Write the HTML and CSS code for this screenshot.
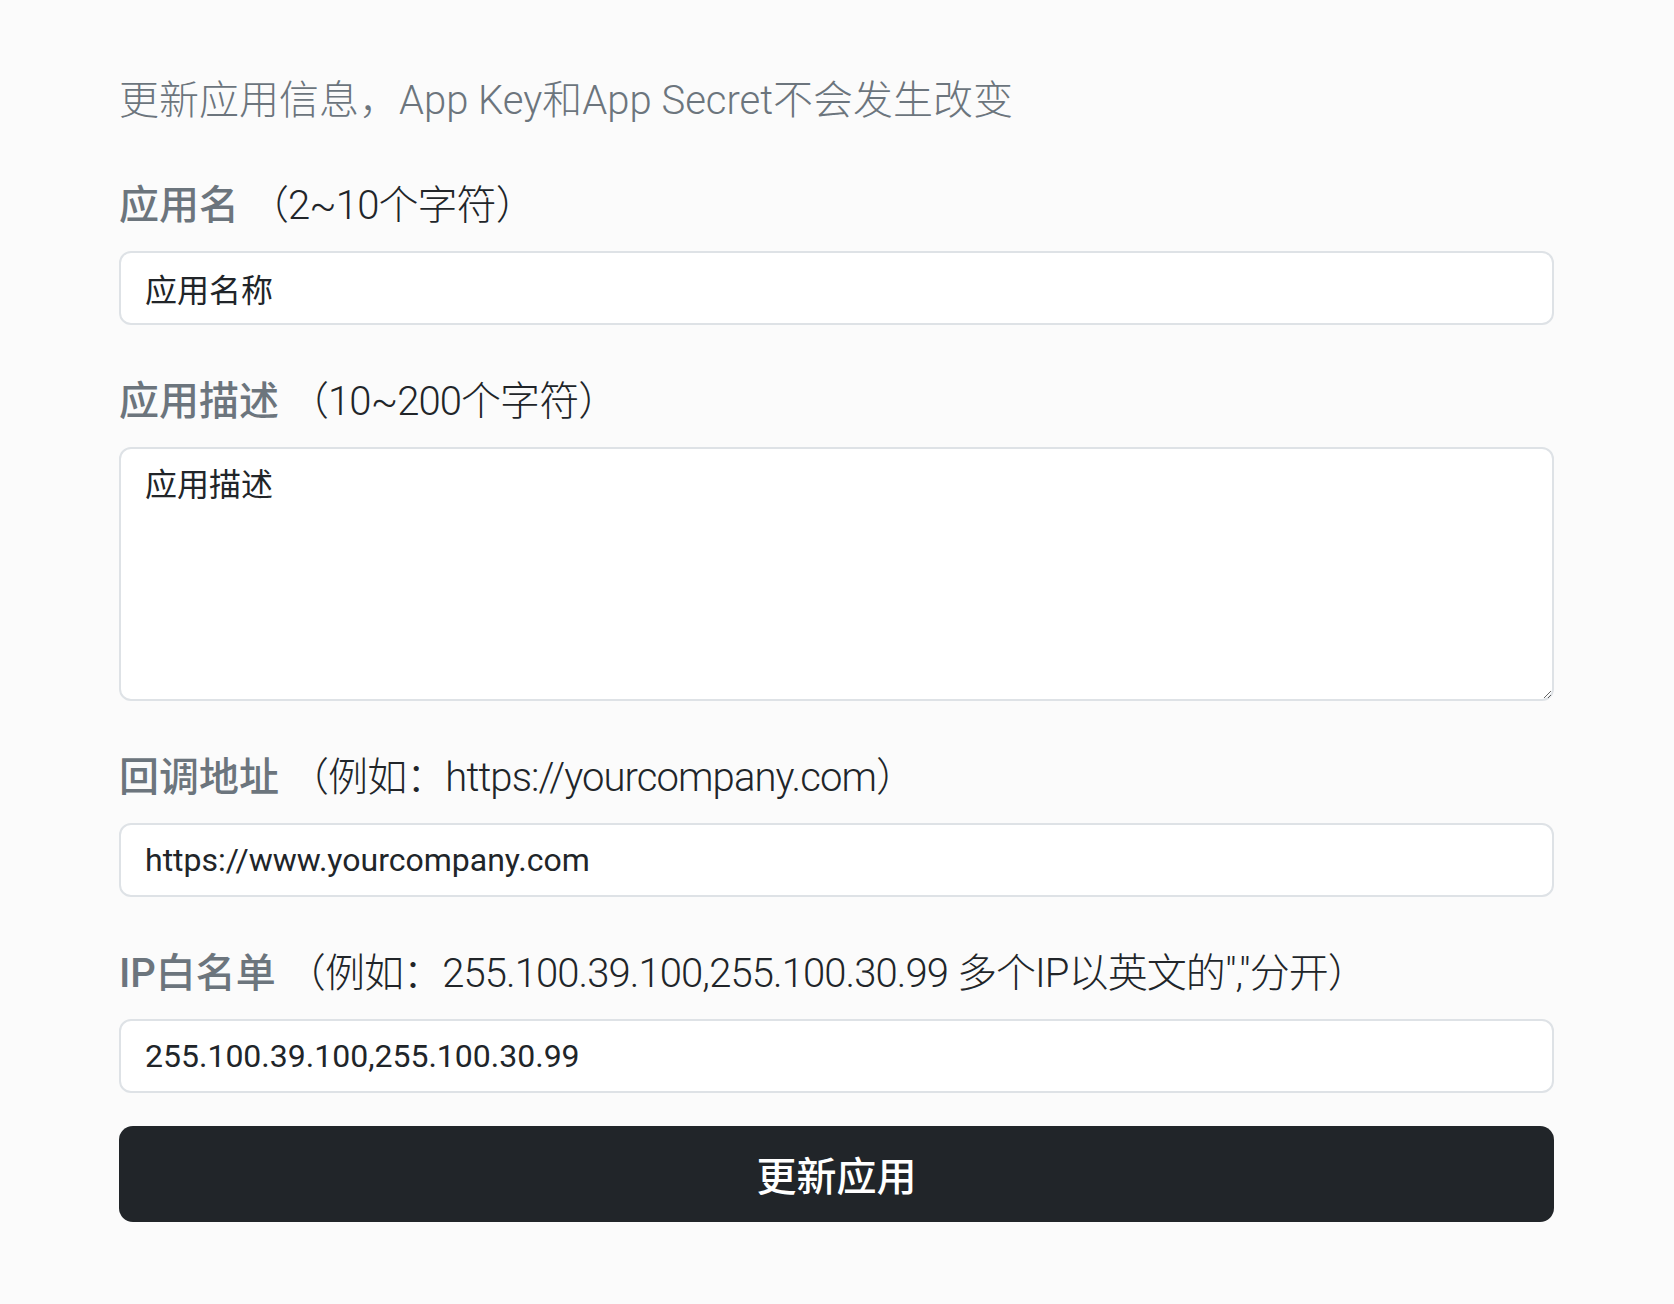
FILE: index.html
```html
<!DOCTYPE html>
<html lang="zh-CN">

<head>
    <meta charset="UTF-8">
    <meta name="viewport" content="width=device-width, initial-scale=1.0">
    <title>更新应用</title>
    <link rel="stylesheet" href="styles.css">
</head>

<body>
    <div class="container">
        <p class="lead">更新应用信息，App Key和App Secret不会发生改变</p>

        <form class="app-form">
            <div class="form-group">
                <label for="name">应用名 <small>（2~10个字符）</small></label>
                <input type="text" id="name" class="form-control" value="应用名称">
            </div>

            <div class="form-group">
                <label for="desc">应用描述 <small>（10~200个字符）</small></label>
                <textarea id="desc" class="form-control textarea">应用描述</textarea>
            </div>

            <div class="form-group">
                <label for="callback">回调地址 <small>（例如：https://yourcompany.com）</small></label>
                <input type="text" id="callback" class="form-control" value="https://www.yourcompany.com">
            </div>

            <div class="form-group last">
                <label for="ips">IP白名单 <small>（例如：255.100.39.100,255.100.30.99 多个IP以英文的","分开）</small></label>
                <input type="text" id="ips" class="form-control" value="255.100.39.100,255.100.30.99">
            </div>

            <button type="button" class="btn">更新应用</button>
        </form>
    </div>
</body>

</html>
```

FILE: styles.css
```css
/* 更新应用表单 */
body {
    margin: 0;
    background-color: #fbfbfb;
    font-family: "Roboto", "Noto Sans CJK SC", sans-serif;
    color: #212529;
}
.container {
    margin: 0 120px 0 119px;
    padding-top: 71px;
}
.lead {
    margin: 0 0 45px;
    font-size: 40px;
    line-height: 60px;
    font-weight: 300;
    color: #6c757d;
}
.form-group {
    display: flex;
    flex-direction: column;
    margin-bottom: 47px;
}
.form-group.last {
    margin-bottom: 33px;
}
label {
    display: block;
    margin-bottom: 15px;
    font-size: 40px;
    line-height: 60px;
    font-weight: 500;
    color: #6c757d;
}
label small {
    font-size: 40px;
    font-weight: 300;
    color: #212529;
    letter-spacing: -0.9px;
}
.form-control {
    box-sizing: border-box;
    width: 100%;
    height: 74px;
    padding: 12px 24px;
    font-family: inherit;
    font-size: 32px;
    line-height: 48px;
    color: #212529;
    background-color: #fff;
    border: 2px solid #dee2e6;
    border-radius: 12px;
    outline: none;
}
.textarea {
    height: 254px;
    resize: vertical;
}
.btn {
    display: block;
    box-sizing: border-box;
    width: 100%;
    height: 96px;
    font-family: inherit;
    font-size: 40px;
    font-weight: 500;
    color: #fff;
    background-color: #212529;
    border: none;
    border-radius: 14px;
    cursor: pointer;
}
```
